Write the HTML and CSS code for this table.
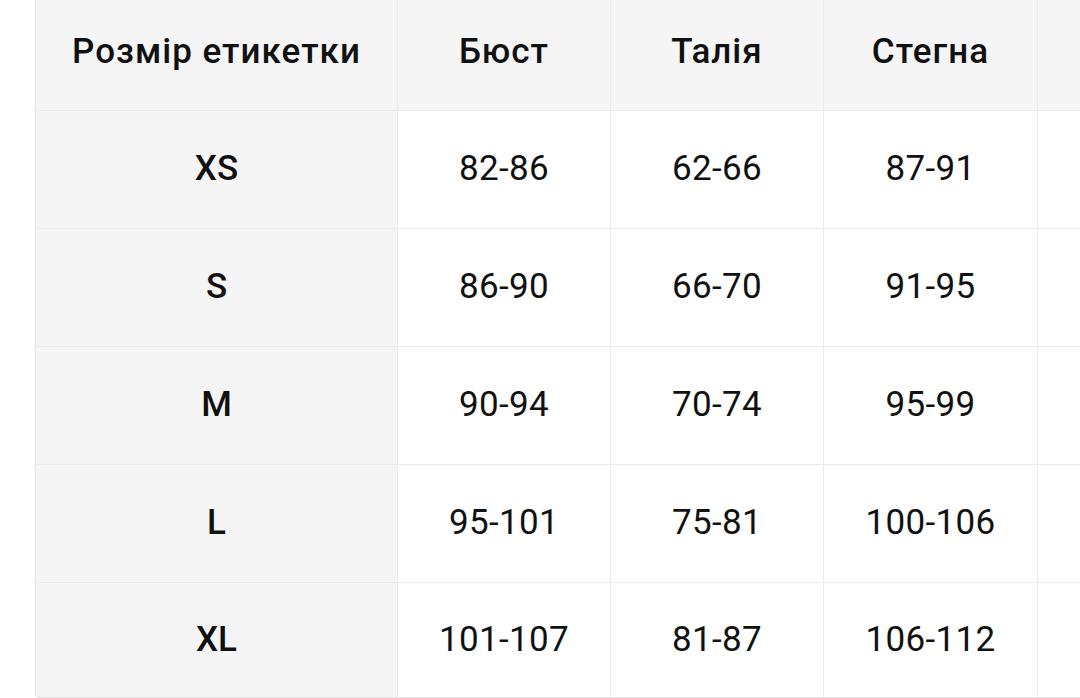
FILE: index.html
```html
<!DOCTYPE html>
<html lang="uk">
<head>
<meta charset="utf-8">
<title>Розмірна сітка</title>
<link rel="stylesheet" href="styles.css">
</head>
<body>
<div class="viewport">
  <table class="sizes">
    <colgroup>
      <col class="c-label">
      <col class="c-val">
      <col class="c-val">
      <col class="c-val4">
      <col class="c-val">
    </colgroup>
    <thead>
      <tr>
        <th class="label">Розмір етикетки</th>
        <th>Бюст</th>
        <th>Талія</th>
        <th>Стегна</th>
        <th></th>
      </tr>
    </thead>
    <tbody>
      <tr><td class="label">XS</td><td>82-86</td><td>62-66</td><td>87-91</td><td></td></tr>
      <tr><td class="label">S</td><td>86-90</td><td>66-70</td><td>91-95</td><td></td></tr>
      <tr><td class="label">M</td><td>90-94</td><td>70-74</td><td>95-99</td><td></td></tr>
      <tr><td class="label">L</td><td>95-101</td><td>75-81</td><td>100-106</td><td></td></tr>
      <tr class="last"><td class="label">XL</td><td>101-107</td><td>81-87</td><td>106-112</td><td></td></tr>
    </tbody>
  </table>
</div>
</body>
</html>
```

FILE: styles.css
```css
html, body {
  margin: 0;
  padding: 0;
  background: #ffffff;
}

.viewport {
  width: 1080px;
  height: 698px;
  overflow: hidden;
  padding-left: 35px;
  box-sizing: border-box;
}

.sizes {
  border-collapse: separate;
  border-spacing: 0;
  table-layout: fixed;
  width: 1216px;
  font-family: Roboto, "Noto Sans", sans-serif;
  color: #111111;
  border-left: 1px solid #e6e6e6;
  border-bottom-left-radius: 4px;
}

.c-label { width: 362px; }
.c-val { width: 213px; }
.c-val4 { width: 214px; }

.sizes th,
.sizes td {
  box-sizing: border-box;
  text-align: center;
  vertical-align: middle;
  border-right: 1px solid #ebebeb;
  border-bottom: 1px solid #ebebeb;
  font-size: 35px;
  white-space: nowrap;
  padding: 0 0 2px 0;
}

.sizes th {
  height: 111px;
  font-weight: 500;
  letter-spacing: 1px;
  background: #f5f5f5;
  padding-bottom: 8px;
}

.sizes td {
  height: 118px;
  font-weight: 400;
  letter-spacing: 0.3px;
}

.sizes td.label {
  background: #f5f5f5;
  font-weight: 500;
  letter-spacing: 0;
}

.sizes tr.last td {
  height: 115px;
  border-bottom-color: #e2e2e2;
}

.sizes tr.last td.label {
  border-bottom-left-radius: 4px;
}
```
